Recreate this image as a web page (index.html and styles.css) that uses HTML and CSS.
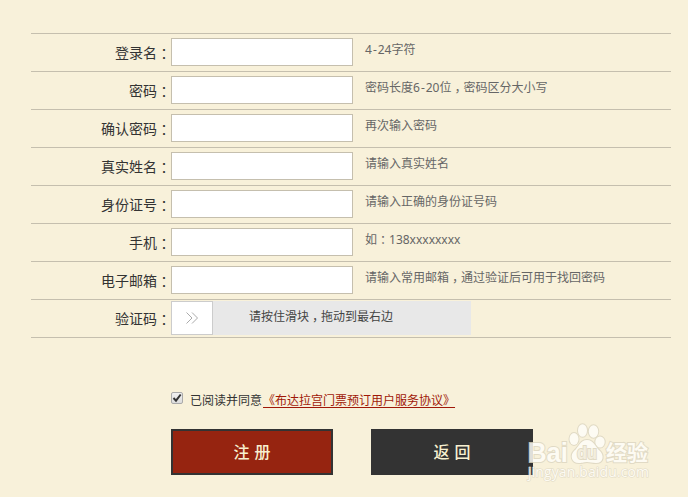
FILE: index.html
```
<!DOCTYPE html>
<html lang="zh-CN">
<head>
    <meta charset="UTF-8">
    <title>用户注册</title>
    <link rel="stylesheet" href="styles.css">
</head>
<body>
    <form class="register">
        <div class="row">
            <label class="label">登录名<span class="colon" lang="zh-TW">：</span></label>
            <input class="field" type="text">
            <span class="hint">4<span class="dash">-</span>24字符</span>
        </div>
        <div class="row">
            <label class="label">密码<span class="colon" lang="zh-TW">：</span></label>
            <input class="field" type="password">
            <span class="hint">密码长度6<span class="dash">-</span>20位<span class="comma" lang="zh-TW">，</span>密码区分大小写</span>
        </div>
        <div class="row">
            <label class="label">确认密码<span class="colon" lang="zh-TW">：</span></label>
            <input class="field" type="password">
            <span class="hint">再次输入密码</span>
        </div>
        <div class="row">
            <label class="label">真实姓名<span class="colon" lang="zh-TW">：</span></label>
            <input class="field" type="text">
            <span class="hint">请输入真实姓名</span>
        </div>
        <div class="row">
            <label class="label">身份证号<span class="colon" lang="zh-TW">：</span></label>
            <input class="field" type="text">
            <span class="hint">请输入正确的身份证号码</span>
        </div>
        <div class="row">
            <label class="label">手机<span class="colon" lang="zh-TW">：</span></label>
            <input class="field" type="text">
            <span class="hint">如<span class="colon" lang="zh-TW">：</span>138xxxxxxxx</span>
        </div>
        <div class="row">
            <label class="label">电子邮箱<span class="colon" lang="zh-TW">：</span></label>
            <input class="field" type="text">
            <span class="hint">请输入常用邮箱<span class="comma" lang="zh-TW">，</span>通过验证后可用于找回密码</span>
        </div>
        <div class="row">
            <label class="label">验证码<span class="colon" lang="zh-TW">：</span></label>
            <div class="slider">
                <div class="handle">
                    <svg width="12" height="12" viewBox="0 0 12 12"><path d="M.5 .5 6 6 .5 11.5M6 .5 11.5 6 6 11.5"/></svg>
                </div>
                <span class="slider-text">请按住滑块<span class="comma" lang="zh-TW">，</span>拖动到最右边</span>
            </div>
        </div>

        <div class="agree">
            <span class="check">
                <svg width="12" height="12" viewBox="0 0 12 12"><path d="M2.5 6 5 8.6 9.7 2.5"/></svg>
            </span>
            <span class="agree-text">已阅读并同意</span>
            <a class="agreement" href="#">《布达拉宫门票预订用户服务协议》</a>
        </div>

        <div class="buttons">
            <button class="btn submit" type="button">注 册</button>
            <button class="btn back" type="button">返 回</button>
        </div>
    </form>

    <svg class="watermark" width="130" height="64" viewBox="0 0 130 64">
        <text class="bai" x="3" y="41" textLength="40" lengthAdjust="spacingAndGlyphs">Bai</text>
        <ellipse cx="49" cy="18" rx="4.5" ry="6"/>
        <ellipse cx="57.5" cy="9.5" rx="4.5" ry="6.3"/>
        <ellipse cx="68.5" cy="10.5" rx="4.7" ry="6.2"/>
        <ellipse cx="75" cy="21" rx="4.7" ry="5.5"/>
        <path d="M62 19C55 19 54 26 49 30C45 34 46 42 54 42C58 42 59 41 62 41C65 41 67 42 71 42C79 42 79 34 75 30C70 26 69 19 62 19Z"/>
        <text class="du" x="52" y="38" textLength="20" lengthAdjust="spacingAndGlyphs">du</text>
        <text class="jingyan" x="81" y="39" textLength="42">经验</text>
        <text class="url" x="3" y="56" textLength="121">jingyan.baidu.com</text>
    </svg>
</body>
</html>
```

FILE: styles.css
```
body {
    margin: 0;
    height: 497px;
    overflow: hidden;
    background: #f8f1da;
    font-family: "Noto Sans", "Noto Sans CJK SC", sans-serif;
    color: #333;
}

.register {
    width: 640px;
    margin: 33px 0 0 31px;
    border-top: 1px solid #c5bfae;
}

.row {
    display: flex;
    box-sizing: border-box;
    height: 38px;
    border-bottom: 1px solid #c5bfae;
}

.label {
    width: 140px;
    font-size: 14px;
    line-height: 38px;
    text-align: right;
}

/* punctuation centred in its square */
.colon,
.comma {
    font-family: "Noto Sans CJK TC", sans-serif;
    line-height: 1;
}

.colon {
    vertical-align: -1px;
}

.comma {
    vertical-align: -4px;
}

.dash {
    margin: 0 1px;
}

.field {
    box-sizing: border-box;
    width: 182px;
    height: 28px;
    margin: 4px 12px 0 0;
    padding: 0 5px;
    border: 1px solid #c5bfae;
    background: #fff;
}

.hint {
    font-size: 12px;
    line-height: 32px;
    color: #666;
}

.slider {
    display: flex;
    width: 300px;
    height: 34px;
    margin-top: 1px;
    background: #e8e8e8;
}

.handle {
    display: flex;
    box-sizing: border-box;
    width: 42px;
    border: 1px solid #ccc;
    background: #fff;
    align-items: center;
    justify-content: center;
}

.handle path {
    fill: none;
    stroke: #aaa;
}

.slider-text {
    margin-left: 36px;
    font-size: 12px;
    line-height: 31px;
    color: #444;
}

.agree {
    display: flex;
    margin: 50px 0 0 140px;
    height: 24px;
    font-size: 12px;
    line-height: 26px;
}

.check {
    box-sizing: border-box;
    width: 12px;
    height: 12px;
    margin: 4px 7px 0 0;
    border: 1px solid #aaa;
    border-radius: 2px;
    background: linear-gradient(#f0f0f0, #ddd);
}

.check svg {
    display: block;
    margin: -1px;
}

.check path {
    fill: none;
    stroke: #333;
    stroke-width: 2;
}

.agreement {
    margin-left: 1px;
    color: #a01808;
    text-underline-offset: 2px;
}

.buttons {
    display: flex;
    gap: 38px;
    margin: 17px 0 0 140px;
}

.btn {
    box-sizing: border-box;
    width: 162px;
    height: 46px;
    padding: 0 0 2px;
    border: 2px solid #333;
    color: #f7f0d0;
    font-family: inherit;
    font-size: 16px;
    font-weight: 500;
    word-spacing: 1px;
}

.submit {
    background: #962410;
}

.back {
    background: #333;
}

/* logo lies over the corner of the second button */
.watermark {
    position: absolute;
    left: 525px;
    top: 421px;
    fill: #fffdf8;
    stroke: #ddd7c2;
    stroke-width: 2;
    paint-order: stroke;
    opacity: .85;
}

.watermark text {
    font-family: "Liberation Sans", "Noto Sans CJK SC", sans-serif;
}

.bai {
    font-size: 28px;
    font-weight: bold;
}

.jingyan {
    font-size: 21px;
    font-weight: bold;
}

.watermark .url {
    font-family: "Open Sans", sans-serif;
    font-size: 14px;
    stroke-width: 1.2;
}

.du {
    font-size: 19px;
    font-weight: bold;
    fill: #f3eedf;
}
```
